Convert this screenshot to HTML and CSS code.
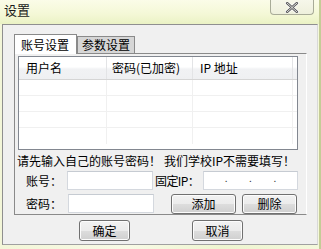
FILE: index.html
```html
<!DOCTYPE html>
<html>
<head>
<meta charset="utf-8">
<link rel="stylesheet" href="styles.css">
</head>
<body>
<div class="window">
  <div class="titlebar">
    <span class="title">设置</span>
    <span class="close"><svg width="14" height="11" viewBox="0 0 14 11"><path d="M2 1 L12 10 M12 1 L2 10" stroke="#ffffff" stroke-width="4" stroke-linecap="round"/><path d="M2 1 L12 10 M12 1 L2 10" stroke="#5a5a5a" stroke-width="2.4" stroke-linecap="round"/><path d="M2 1 L12 10 M12 1 L2 10" stroke="#e8e8e8" stroke-width="0.9" stroke-linecap="round"/></svg></span>
  </div>
  <div class="client">
    <div class="tabs">
      <span class="tab active">账号设置</span>
      <span class="tab">参数设置</span>
    </div>
    <div class="panel">
      <div class="list">
        <div class="lrow head">
          <span class="c1">用户名</span><span class="c2">密码(已加密)</span><span class="c3">IP 地址</span><span class="c4"></span>
        </div>
        <div class="lrow"><span class="c1"></span><span class="c2"></span><span class="c3"></span></div>
        <div class="lrow"><span class="c1"></span><span class="c2"></span><span class="c3"></span></div>
        <div class="lrow"><span class="c1"></span><span class="c2"></span><span class="c3"></span></div>
        <div class="lrow last"><span class="c1"></span><span class="c2"></span><span class="c3"></span></div>
      </div>
      <div class="hint">
        <span>请先输入自己的账号密码！</span>
        <span>我们学校IP不需要填写！</span>
      </div>
      <div class="frow">
        <span class="lab">账号：</span>
        <span class="input"></span>
        <span class="lab2">固定IP：</span>
        <span class="input ip"><i>.</i><i>.</i><i>.</i></span>
      </div>
      <div class="frow second">
        <span class="lab">密码：</span>
        <span class="input"></span>
        <span class="btn add">添加</span>
        <span class="btn del">删除</span>
      </div>
    </div>
    <div class="footer">
      <span class="btn big">确定</span>
      <span class="btn big">取消</span>
    </div>
  </div>
</div>
</body>
</html>
```

FILE: styles.css
```css
* { box-sizing: border-box; }
html, body { margin: 0; padding: 0; }
body {
  width: 321px;
  height: 249px;
  overflow: hidden;
  font-family: "Noto Sans CJK SC", "Noto Sans", sans-serif;
  font-size: 12px;
  color: #000;
}
.window {
  width: 321px;
  height: 249px;
  background: linear-gradient(90deg, #f3f6d8 0%, #f8fae6 40%, #eef5d0 70%, #f4f8dc 100%);
  border-right: 2px solid #c4cc96;
  display: flex;
  flex-direction: column;
}
.titlebar {
  height: 24px;
  display: flex;
  align-items: flex-start;
  background: linear-gradient(180deg, #fbfce8 0%, #f4f8d6 60%, #eaf2c4 100%);
}
.title {
  margin: 1px 0 0 4px;
  font-size: 13px;
  line-height: 17px;
  color: #1a1a1a;
}
.close {
  margin-left: auto;
  margin-right: 5px;
  width: 44px;
  height: 15px;
  border: 1px solid #a8ab98;
  border-top: none;
  border-radius: 0 0 4px 4px;
  background: linear-gradient(180deg, #f6f7ea, #eef0dc);
  display: flex;
  justify-content: center;
  align-items: center;
}
.client {
  margin: 0 1px 4px 2px;
  flex: 1;
  background: #f0f0f0;
  border: 1px solid #8f8f8f;
  border-right-color: #d8d8d8;
  border-bottom-color: #a0a0a0;
  display: flex;
  flex-direction: column;
}
.tabs {
  display: flex;
  align-items: flex-end;
  margin: 8px 0 0 11px;
  height: 20px;
}
.tab {
  height: 17px;
  line-height: 16px;
  padding: 0 4px;
  border: 1px solid #8a8a8a;
  border-bottom: none;
  background: #d6d6d6;
  font-size: 12px;
}
.tab.active {
  height: 20px;
  line-height: 19px;
  padding: 0 7px 0 6px;
  background: #ffffff;
  position: relative;
  top: 1px;
  z-index: 1;
}
.panel {
  margin: 0 10px 0 11px;
  height: 162px;
  border: 1px solid #8a8a8a;
  border-right-color: #ffffff;
  background: #f0f0f0;
  padding: 2px 8px 0 3px;
}
.list {
  height: 94px;
  border: 1px solid #828790;
  background: #fff;
  overflow: hidden;
}
.lrow {
  display: flex;
  height: 16px;
  border-bottom: 1px solid #f0f0f0;
}
.lrow.last { border-bottom: none; }
.lrow span { display: block; border-right: 1px solid #f0f0f0; }
.c1 { width: 88px; padding-left: 7px; }
.c2 { width: 86px; padding-left: 5px; }
.c3 { width: 100px; padding-left: 7px; }
.c4 { flex: 1; border-right: none !important; }
.lrow.head {
  height: 23px;
  line-height: 21px;
  background: linear-gradient(180deg, #ffffff 0%, #ffffff 45%, #f1f2f4 55%, #eff0f2 100%);
  border-bottom: 1px solid #d5d5d5;
  font-size: 12px;
}
.lrow.head span { border-right: 1px solid #e3e4e6; }
.hint {
  display: flex;
  justify-content: space-between;
  margin: 3px 0 0 -1px;
  height: 15px;
  line-height: 15px;
  padding-right: 3px;
}
.frow {
  display: flex;
  align-items: center;
  height: 19px;
  margin-top: 3px;
}
.frow.second { margin-top: 4px; }
.lab { width: 50px; padding-left: 8px; white-space: nowrap; }
.input {
  display: block;
  flex: none;
  width: 86px;
  height: 19px;
  background: #fff;
  border: 1px solid #d4d8de;
  border-top-color: #c6cbd2;
}
.lab2 {
  margin-left: 2px;
  width: 48px;
  flex: none;
  white-space: nowrap;
  letter-spacing: -0.6px;
}
.input.ip {
  width: 95px;
  display: flex;
  justify-content: space-around;
  padding: 0 10px;
  font-style: normal;
  line-height: 12px;
}
.input.ip i { font-style: normal; font-size: 10px; color: #333; }
.btn {
  display: flex;
  flex: none;
  justify-content: center;
  align-items: center;
  height: 20px;
  border: 1px solid #707070;
  border-radius: 3px;
  background: linear-gradient(180deg, #f2f2f2 0%, #ebebeb 50%, #dddddd 51%, #cfcfcf 100%);
  box-shadow: inset 0 0 0 1px #fcfcfc;
}
.btn.add { width: 65px; margin-left: 17px; }
.btn.del { width: 55px; margin-left: 6px; }
.footer {
  display: flex;
  margin-top: 5px;
  padding-left: 76px;
}
.btn.big { width: 51px; height: 21px; }
.btn.big + .btn.big { margin-left: 62px; }
```
